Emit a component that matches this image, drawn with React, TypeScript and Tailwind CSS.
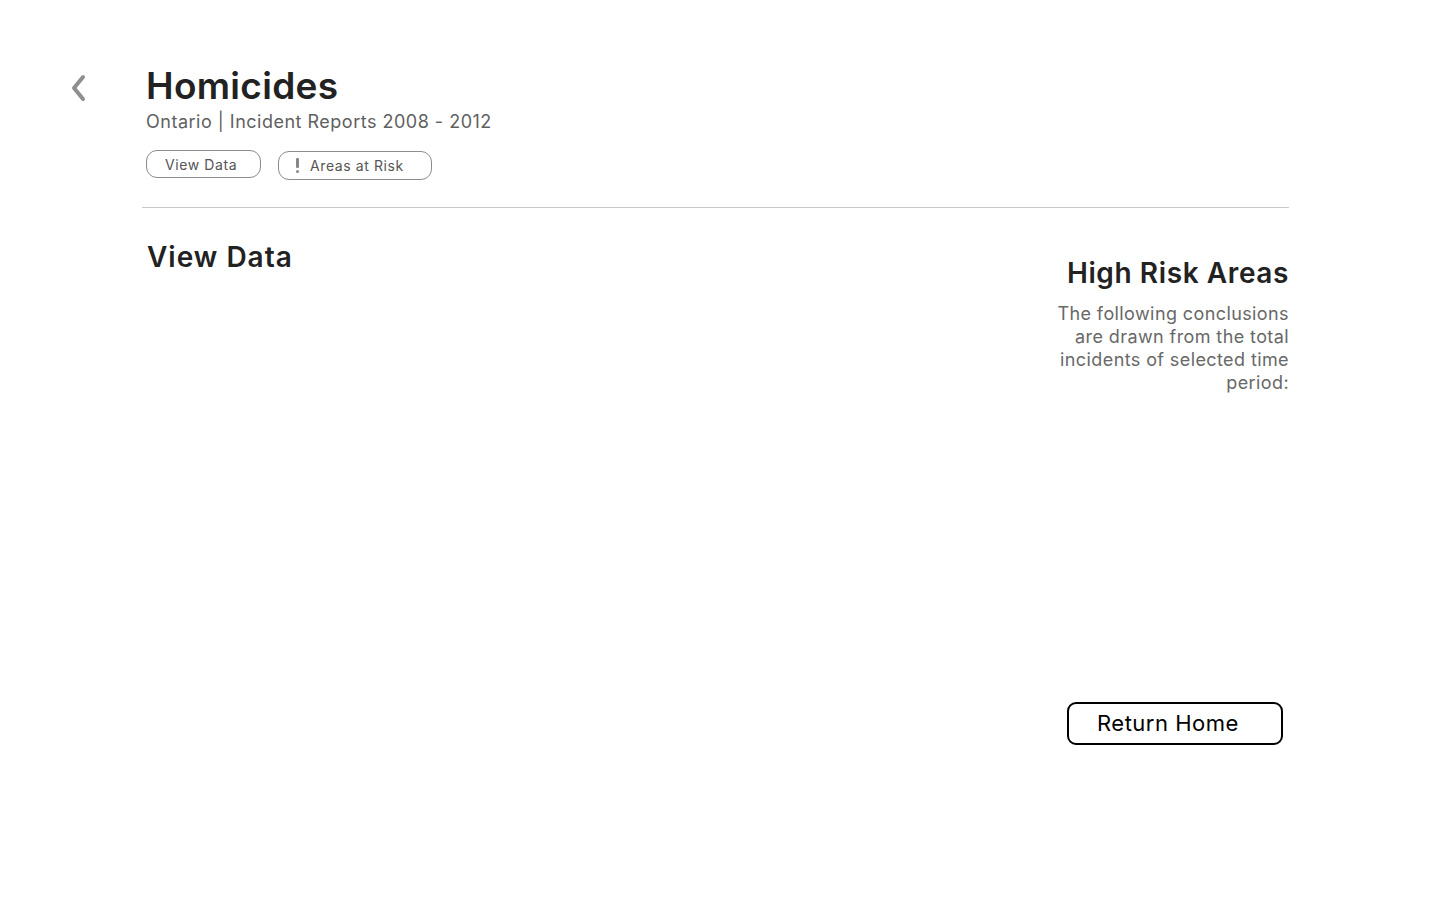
import React from "react";

export default function App() {
  return (
    <div className="w-[1440px] h-[900px] bg-white relative" style={{ fontFamily: "Inter, 'Noto Sans', sans-serif" }}>
      <div className="flex pt-[64px]">
        <div className="w-[146px] flex justify-start pl-[66px] pt-[9px]">
          <svg width="24" height="30" viewBox="0 0 24 30" fill="none">
            <path d="M17 4 L8 15 L17 26" stroke="#8e8e93" strokeWidth="4" strokeLinecap="round" strokeLinejoin="round" />
          </svg>
        </div>
        <div className="flex flex-col">
          <h1 className="text-[37px] leading-[44px] font-semibold text-[#222] tracking-[0.3px]">Homicides</h1>
          <p className="text-[18px] leading-[24px] text-[#5f5f5f] mt-[2px] tracking-[0.5px]">Ontario | Incident Reports 2008 - 2012</p>
          <div className="flex gap-[17px] mt-[16px] items-start">
            <div className="w-[115px] h-[28px] rounded-[11px] border border-[#8c8c8c] text-[14px] text-[#555] flex items-center pl-[18px] tracking-[0.6px]">View Data</div>
            <div className="w-[154px] h-[29px] mt-[1px] rounded-[11px] border border-[#8c8c8c] text-[14px] text-[#555] flex items-center pl-[17px] tracking-[0.6px]">
              <span className="inline-block w-[3px] mr-[11px] flex flex-col items-center">
                <span className="block w-[3px] h-[10px] bg-[#888] rounded-[1px]" />
                <span className="block w-[3px] h-[3px] bg-[#888] rounded-full mt-[2px]" />
              </span>
              Areas at Risk
            </div>
          </div>
        </div>
      </div>
      <div className="ml-[142px] w-[1147px] h-px bg-[#c8c8c8] mt-[27px]" />
      <div className="ml-[147px] w-[1142px] flex justify-between mt-[32px]">
        <h2 className="text-[28px] leading-[34px] font-semibold text-[#222] tracking-[1px]">View Data</h2>
        <div className="flex flex-col items-end mt-[16px]">
          <h2 className="text-[28px] leading-[34px] font-semibold text-[#222] tracking-[0.6px]">High Risk Areas</h2>
          <p className="w-[240px] text-right text-[18px] leading-[23px] text-[#686868] mt-[12px] tracking-[0.4px]">
            The following conclusions are drawn from the total incidents of selected time period:
          </p>
        </div>
      </div>
      <div className="ml-[1067px] mt-[308px] w-[216px] h-[43px] rounded-[9px] border-2 border-black flex items-center pl-[28px] text-[22px] text-black tracking-[0.5px]">
        Return Home
      </div>
    </div>
  );
}
